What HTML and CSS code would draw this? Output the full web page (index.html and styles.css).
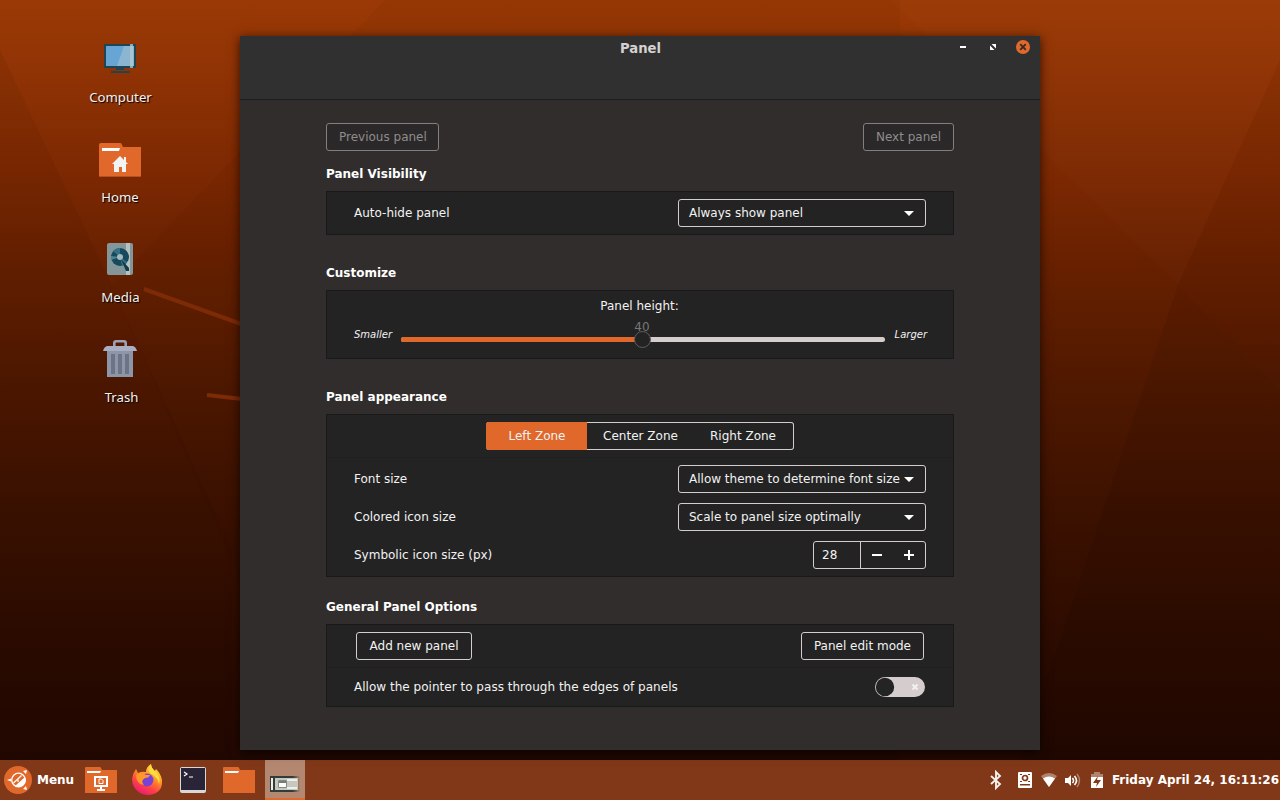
FILE: index.html
```html
<!DOCTYPE html>
<html lang="en">
<head>
<meta charset="utf-8">
<title>Panel</title>
<link rel="stylesheet" href="styles.css">
</head>
<body>
<div class="desktop">
  <svg class="wallpaper" viewBox="0 0 1280 760" preserveAspectRatio="none">
    <path d="M0 50L112 285L0 390Z" fill="#000" opacity=".05"/>
    <path d="M0 390L112 285L232 550V760H0Z" fill="#000" opacity=".05"/>
    <path d="M385 0L112 285L240 580V760H900V0Z" fill="#000" opacity=".03"/>
    <path d="M890 0L1178 285L1280 60V0Z" fill="#fff" opacity=".012"/>
    <path d="M1178 285L1280 390V60Z" fill="#000" opacity=".04"/>
    <path d="M1178 285L1280 390V760H1020Z" fill="#000" opacity=".07"/>
    <path d="M144 289L244 325M207 395L242 399" stroke="#7d2b06" stroke-width="4"/>
  </svg>

  <nav class="shortcuts">
    <div class="shortcut">
      <svg width="44" height="44" viewBox="0 0 44 44"><path d="M6 6h32v24H6z" fill="#1f4454"/><path d="M8 8h28v20H8z" fill="#67a5d5"/><path d="M26 8h10v20H19z" fill="#8cb5d1"/><path d="M32 6h3v24h-3z" fill="#b0cbd0" opacity=".75"/><path d="M18 30h8v2h-8zM13 33h19v2H13z" fill="#1f4454"/></svg>
      <span class="nudge">Computer</span>
    </div>
    <div class="shortcut">
      <svg width="44" height="44" viewBox="0 0 44 44"><path d="M1 7q0-2 2-2h19q2 0 2 2l1 2h18v30H1z" fill="#e0682b"/><path d="M1 38h42v1H1z" fill="#b65020"/><path d="M4 10h18l-1 3H4z" fill="#fff"/><path d="M22 18l8 8h-2v8h-4v-5h-3v5h-5v-8h-2zM26 19h2v5h-2z" fill="#f2f4f4"/></svg>
      <span>Home</span>
    </div>
    <div class="shortcut">
      <svg width="44" height="44" viewBox="0 0 44 44"><rect x="9" y="5" width="26" height="32" rx="2" fill="#83979a"/><path d="M28 5h4v32h-4z" fill="#b6c2bf"/><circle cx="22" cy="19" r="9" fill="#164a5c"/><path d="M22 19l-7-6a9 9 0 0 1 7-3zM22 19l7 5a9 9 0 0 1-5 4z" fill="#347189"/><path d="M22 19l-9-1v4z" fill="#4e8397"/><circle cx="22" cy="19" r="3" fill="#a7b8ba"/><path d="M23 21l8 9v3h-3z" fill="#123c4b"/></svg>
      <span class="nudge">Media</span>
    </div>
    <div class="shortcut">
      <svg width="44" height="44" viewBox="0 0 44 44"><path d="M16.300 9V5q0-1.700 1.700-1.700h8q1.700 0 1.700 1.700v4" fill="none" stroke="#9da1b4" stroke-width="2.600"/><path d="M9 12h26v27H9z" fill="#8d95a8"/><path d="M9 8h26q3 1 4 5H5q1-4 4-5z" fill="#aaaec2"/><path d="M13 16h4v20h-4zM20 16h4v20h-4zM27 16h4v20h-4z" fill="#6c7485"/></svg>
      <span class="nudge2">Trash</span>
    </div>
  </nav>

  <main class="window">
    <header class="titlebar">
      <h1>Panel</h1>
      <div class="controls">
        <svg width="20" height="20" viewBox="0 0 20 20"><path d="M7 10h6v2H7z" fill="#fff"/></svg>
        <svg width="20" height="20" viewBox="0 0 20 20"><path d="M8.500 8H13v4.500zM7 9.500V14h4.500z" fill="#fff"/></svg>
        <svg width="20" height="20" viewBox="0 0 20 20"><circle cx="10" cy="11" r="7" fill="#e2692c"/><path d="M7.200 8.200l5.600 5.600m0-5.600l-5.600 5.600" stroke="#3a2a24" stroke-width="1.900"/></svg>
      </div>
    </header>
    <div class="content">
      <div class="pager">
        <button class="button previous" disabled>Previous panel</button>
        <button class="button" disabled>Next panel</button>
      </div>

      <h2>Panel Visibility</h2>
      <section class="card">
        <div class="row">
          <span>Auto-hide panel</span>
          <div class="select"><span>Always show panel</span><i class="caret"></i></div>
        </div>
      </section>

      <h2 class="spaced">Customize</h2>
      <section class="card height-card">
        <div class="height-title">Panel height:</div>
        <div class="slider-row">
          <em>Smaller</em>
          <div class="slider"><div class="fill"></div><span class="value">40</span><i class="thumb"></i></div>
          <em>Larger</em>
        </div>
      </section>

      <h2 class="spaced">Panel appearance</h2>
      <section class="card">
        <div class="zones">
          <div class="tabs"><span class="tab active">Left Zone</span><span class="tab center">Center Zone</span><span class="tab">Right Zone</span></div>
        </div>
        <div class="row tall">
          <span>Font size</span>
          <div class="select"><span>Allow theme to determine font size</span><i class="caret"></i></div>
        </div>
        <div class="row tall">
          <span>Colored icon size</span>
          <div class="select"><span>Scale to panel size optimally</span><i class="caret"></i></div>
        </div>
        <div class="row tall last">
          <span>Symbolic icon size (px)</span>
          <div class="stepper"><span class="number">28</span>
            <svg width="32" height="26" viewBox="0 0 32 26"><path d="M11 12h10v2H11z" fill="#fff"/></svg>
            <svg width="32" height="26" viewBox="0 0 32 26"><path d="M11 12h4V8h2v4h4v2h-4v4h-2v-4h-4z" fill="#fff"/></svg>
          </div>
        </div>
      </section>

      <h2 class="near">General Panel Options</h2>
      <section class="card">
        <div class="row actions">
          <button class="button add">Add new panel</button>
          <button class="button">Panel edit mode</button>
        </div>
        <div class="row pointer">
          <span>Allow the pointer to pass through the edges of panels</span>
          <svg width="50" height="20" viewBox="0 0 50 20"><rect width="50" height="20" rx="10" fill="#d5cccd"/><circle cx="10" cy="10" r="9.200" fill="#242424"/><path d="M37.500 7.500l5 5m0-5l-5 5" stroke="#f4f0f0" stroke-width="2"/></svg>
        </div>
      </section>
    </div>
  </main>
</div>

<footer class="taskbar">
  <div class="menu">
    <svg width="28" height="28" viewBox="0 0 28 28"><circle cx="14" cy="14" r="14" fill="#e0682b"/><circle cx="14.500" cy="14" r="6.800" fill="none" stroke="#fff" stroke-width="1.300"/><path d="M11 20l10-9q2 5-2 8-4 3-8 1z" fill="#fff"/><path d="M9.500 17l8-7.500M14 13v3" stroke="#fff" stroke-width="1.200"/><path d="M3 14l4-1.500v3zM19 5l4-1-1 4zM19 23l4 1-1-4z" fill="#fff"/></svg>
    <span>Menu</span>
  </div>
  <div class="launchers">
    <svg width="40" height="40" viewBox="0 0 40 40"><path d="M4 8q0-1 1-1h14q1 0 2 3h15v23H4z" fill="#e0682b"/><path d="M6 11h14l-1 2H6z" fill="#fff"/><path d="M14 17h12v9H14zM20 26v3M16 30h8" fill="none" stroke="#fff" stroke-width="2"/><path d="M18 19h2.500l1.500 1.500v3h-4z" fill="none" stroke="#fff"/></svg>
    <svg width="40" height="40" viewBox="0 0 40 40">
      <defs><linearGradient id="fox" x1=".85" y1="0" x2=".3" y2="1"><stop offset="0" stop-color="#fff44f"/><stop offset=".4" stop-color="#ff9a24"/><stop offset=".7" stop-color="#ff4345"/><stop offset="1" stop-color="#e81878"/></linearGradient></defs>
      <path d="M9 9l2 4q4-2 8-1 0-5 5-8 0 4 4 7l1-2q5 5 6 11 1 9-6 13-8 4-16 0-8-5-8-14 1-6 4-10z" fill="url(#fox)"/><circle cx="20" cy="20" r="6.500" fill="#7a42d3"/><path d="M9 15q4-4 10 0h4q-1 3-5 3-5 3-1 7-8-1-8-10z" fill="#ff9827"/><path d="M24 4q0 4 5 8 5 6 3 12-1-6-6-9-8-4-2-11z" fill="#ffdc3e"/>
    </svg>
    <svg width="40" height="40" viewBox="0 0 40 40"><rect x="7" y="7" width="26" height="26" rx="2" fill="#d8d8d8"/><path d="M8 8h24v22H8z" fill="#292438"/><path d="M11 12l3 2-3 2M16 17h4" fill="none" stroke="#fff" stroke-width="1.200"/></svg>
    <svg width="40" height="40" viewBox="0 0 40 40"><path d="M4 8q0-1 1-1h14q1 0 2 3h15v23H4z" fill="#e0682b"/><path d="M6 11h14l-1 2H6z" fill="#fff"/></svg>
    <div class="active-app"><svg width="40" height="38" viewBox="0 0 40 38"><defs><linearGradient id="fade"><stop offset=".75" stop-color="#343c38"/><stop offset="1" stop-color="#343c38" stop-opacity="0"/></linearGradient></defs><path d="M5 16h30v16H5z" fill="url(#fade)"/><path d="M8 18h25v12H8z" fill="#c5c8c0"/><path d="M6 18h2v12H6z" fill="#eceee9"/><path d="M8 18h2v12H8z" fill="#343c38"/><path d="M13.500 20.500h8v7h-8z" fill="#fff" stroke="#858a82"/><path d="M14 21h7v2h-7z" fill="#777c75"/><path d="M22 19h10v2H22zM22 27h10v2H22z" fill="#eeeeea"/></svg></div>
  </div>
  <div class="tray">
    <svg width="16" height="20" viewBox="0 0 16 20"><path d="M3 6l9 8-4 4V2l4 4-9 8" fill="none" stroke="#f5eeea" stroke-width="1.900"/></svg>
    <svg class="drive" width="14" height="16" viewBox="0 0 14 16"><rect width="14" height="16" rx="1" fill="#fff"/><circle cx="7" cy="6" r="2.500" fill="none" stroke="#803818" stroke-width="1.700"/><path d="M2 2h2v1H2zM10 2h2v1h-2zM2 9h2v1H2zM10 9h2v1h-2zM2 12h10v1.500H2z" fill="#803818"/></svg>
    <svg class="wifi" width="16" height="16" viewBox="0 0 16 16"><path d="M0 4q8-6 16 0L8 15z" fill="#fff" opacity=".38"/><path d="M2 6.500q6-4 12 0L8 15z" fill="#fff"/></svg>
    <svg class="volume" width="16" height="16" viewBox="0 0 16 16"><path d="M0 6h3l3-3v11l-3-3H0z" fill="#fff"/><path d="M7.500 6q2 2.500 0 5M9.500 4q4 4.500 0 9" fill="none" stroke="#fff" stroke-width="1.600"/><path d="M12 2q5 6.500 0 13" fill="none" stroke="#fff" stroke-width="1.400" opacity=".4"/></svg>
    <svg class="battery" width="14" height="16" viewBox="0 0 14 16"><path d="M1 2h3V0h6v2h3v5H1z" fill="#fff" opacity=".38"/><path d="M1 5h12v11H1z" fill="#fff"/><path d="M8 4L3 11h4l-1 4 5-7H7z" fill="#803818"/></svg>
    <time>Friday April 24, 16:11:26</time>
  </div>
</footer>
</body>
</html>
```
FILE: styles.css
```css
* { box-sizing: border-box; }
body {
  margin: 0;
  width: 1280px;
  height: 800px;
  overflow: hidden;
  display: flex;
  flex-direction: column;
  background: #220900;
  color: #f2f2f2;
  font: 12px/16px "DejaVu Sans", sans-serif;
}
.desktop {
  position: relative;
  height: 760px;
  background: linear-gradient(#9a3905 0, #923405 60px, #7b2802 180px, #662000 270px, #4f1800 390px, #3b1100 520px, #2c0b00 650px, #220800 760px);
}
.wallpaper { position: absolute; inset: 0; width: 100%; height: 100%; }
.shortcuts { position: absolute; left: 70px; top: 38px; }
.shortcut {
  display: flex;
  flex-direction: column;
  align-items: center;
  width: 100px;
  height: 100px;
  font: 13.2px/18px "Noto Sans", sans-serif;
  text-shadow: 1px 1px 1px #000;
}
.shortcut svg { display: block; margin-bottom: 6px; }
.shortcut .nudge { margin-left: 1px; }
.shortcut .nudge2 { margin-left: 3px; }

.window {
  position: absolute;
  left: 240px;
  top: 36px;
  width: 800px;
  height: 714px;
  background: #312d2c;
  box-shadow: 0 2px 10px rgba(0, 0, 0, .7);
}
.titlebar {
  display: grid;
  grid-template-columns: 1fr auto 1fr;
  height: 64px;
  background: #303030;
  border-bottom: 1px solid #1f1d1d;
}
h1 { grid-column: 2; margin: 4px 0 0 1px; font-size: 13.2px; line-height: 17px; color: #d6d1d1; }
.controls { display: flex; justify-content: flex-end; gap: 10px; padding-right: 7px; }
.content { padding: 23px 86px 0; }
.pager { display: flex; justify-content: space-between; }
.button {
  height: 28px;
  padding: 0 12px;
  border: 1px solid #d5cccd;
  border-radius: 3px;
  background: #232323;
  color: #f2f2f2;
  font: inherit;
}
.button:disabled { background: #2a2828; border-color: #857e7e; color: #908c8c; }
.button.previous { width: 113px; white-space: nowrap; }
.button.add { width: 116px; }
h2 { margin: 15px 0 9px; font-size: 12px; line-height: 16px; color: #fff; }
h2.spaced { margin-top: 30px; }
h2.near { margin-top: 22px; }
.card { border: 1px solid #191919; background: #232323; }
.row { display: flex; align-items: center; justify-content: space-between; height: 42px; padding: 0 27px; }
.select {
  display: flex;
  align-items: center;
  justify-content: space-between;
  width: 248px;
  height: 28px;
  padding: 0 11px 0 10px;
  border: 1px solid #d5cccd;
  border-radius: 3px;
  white-space: nowrap;
}
.caret { border: 5px solid transparent; border-top-color: #fff; border-bottom: 0; margin-top: 1px; }
.height-card { height: 69px; }
.height-title { margin: 7px 1px 0 0; text-align: center; }
.slider-row { display: flex; align-items: center; justify-content: space-between; padding: 0 26px 0 27px; margin-top: 13px; font-size: 10px; }
.slider { position: relative; width: 484px; height: 5px; margin-top: 9px; border-radius: 3px; background: #d5cccd; }
.fill { width: 241px; height: 5px; border-radius: 3px 0 0 3px; background: #e0682b; }
.value { position: absolute; left: 233px; top: -18px; font-size: 12px; color: #777; }
.thumb { position: absolute; left: 233px; top: -6px; width: 17px; height: 17px; border: 1px solid #645b5b; border-radius: 50%; background: #232323; }
.zones { display: flex; justify-content: center; height: 43px; padding: 7px 0; border-bottom: 1px solid #202020; }
.tabs { display: flex; width: 308px; height: 28px; border: 1px solid #d5cccd; border-left: 0; border-radius: 3px; line-height: 26px; text-align: center; }
.tab { flex: 1; }
.tab.center { flex: 0 0 106px; padding-left: 1px; }
.tab.active { flex: 0 0 101px; margin: -1px 0; padding-left: 1px; line-height: 28px; background: #e0682b; border-radius: 3px 0 0 3px; }
.row.tall { height: 38px; }
.row.tall.last { height: 40px; padding-bottom: 2px; }
.zones + .row.tall { margin-top: 2px; }
.stepper { display: flex; width: 113px; height: 28px; border: 1px solid #d5cccd; border-radius: 3px; }
.number { width: 47px; padding-left: 8px; border-right: 1px solid #d5cccd; line-height: 26px; }
.actions { height: 43px; padding: 0 29px; border-bottom: 1px solid #202020; }
.pointer { height: 38px; padding-right: 28px; }
.pointer span { letter-spacing: .02px; }

.taskbar { display: flex; align-items: center; justify-content: space-between; height: 40px; background: #803818; font-weight: bold; }
.menu { display: flex; align-items: center; gap: 5px; width: 81px; padding-left: 4px; color: #fff; }
.launchers { display: flex; gap: 6px; flex: 1; }
.active-app { width: 40px; height: 40px; background: #b48770; border-bottom: 2px solid #e0682b; }
.tray { display: flex; align-items: center; padding-right: 1px; color: #fff; }
.drive { margin-left: 14px; }
.wifi { margin-left: 9px; }
.volume { margin-left: 8px; }
.battery { margin-left: 9px; margin-right: 8px; }
```
